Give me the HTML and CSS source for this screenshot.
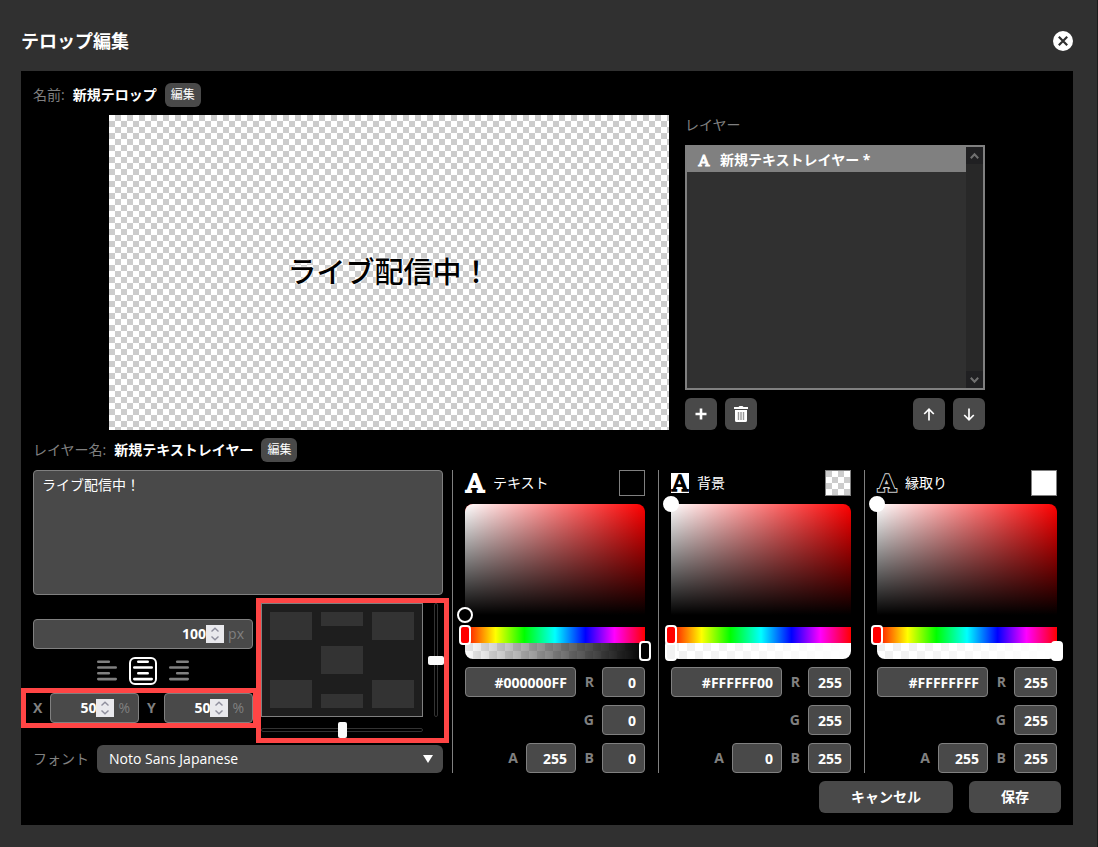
FILE: index.html
```html
<!DOCTYPE html>
<html lang="ja">
<head>
    <meta charset="UTF-8">
    <meta name="viewport" content="width=device-width, initial-scale=1.0">
    <title>テロップ編集</title>
    <link rel="stylesheet" href="styles.css">
</head>
<body>
    <div class="dialog">
        <header class="header">
            <h1 class="title">テロップ編集</h1>
            <button class="close" aria-label="閉じる">
                <svg width="20" height="20" viewBox="0 0 20 20"><circle cx="10" cy="10" r="10" fill="#fff"/><path d="M5.8 5.8l8.4 8.4M14.2 5.8l-8.4 8.4" stroke="#303030" stroke-width="2.2"/></svg>
            </button>
        </header>

        <main class="panel">
            <div class="name-row">
                <span class="muted">名前:</span>
                <strong>新規テロップ</strong>
                <button class="edit">編集</button>
            </div>

            <div class="stage">
                <div class="preview checker">ライブ配信中！</div>
                <section class="layers">
                    <h2 class="layers-title">レイヤー</h2>
                    <div class="layer-list">
                        <div class="layer-items">
                            <div class="layer-item">
                                <svg width="14" height="12" viewBox="0 0 14 12"><text class="slab" x="7" y="12" font-size="15" text-anchor="middle" fill="#fff" stroke="#fff" stroke-width="1">A</text></svg>
                                <span>新規テキストレイヤー *</span>
                            </div>
                        </div>
                        <div class="scrollbar">
                            <span class="scroll-end"><svg width="9" height="6" viewBox="0 0 9 6"><path d="M.8 5.2l3.7-4 3.7 4" fill="none" stroke="#707070" stroke-width="2"/></svg></span>
                            <span class="scroll-end"><svg width="9" height="6" viewBox="0 0 9 6"><path d="M.8.8l3.7 4 3.7-4" fill="none" stroke="#707070" stroke-width="2"/></svg></span>
                        </div>
                    </div>
                    <div class="layer-buttons">
                        <button class="icon-button" aria-label="追加"><svg width="12" height="12" viewBox="0 0 12 12"><path d="M6 .5v11M.5 6h11" stroke="#fff" stroke-width="2.6"/></svg></button>
                        <button class="icon-button" aria-label="削除"><svg width="14" height="16" viewBox="0 0 14 16"><path d="M0 1h4.5L5.5 0h3l1 1H14v2H0zM1 4h12v10.500a1.500 1.500 0 0 1-1.500 1.500h-9A1.500 1.500 0 0 1 1 14.500z" fill="#fff"/><path d="M4.500 6v8M7 6v8M9.500 6v8" stroke="#999" stroke-width="1.400"/></svg></button>
                        <span class="spacer"></span>
                        <button class="icon-button" aria-label="上へ"><svg width="12" height="13" viewBox="0 0 12 13"><path d="M6 12.500V1.500M1.200 6L6 1.200 10.800 6" fill="none" stroke="#fff" stroke-width="1.700"/></svg></button>
                        <button class="icon-button" aria-label="下へ"><svg width="12" height="13" viewBox="0 0 12 13"><path d="M6 .5v11M1.200 7L6 11.800 10.800 7" fill="none" stroke="#fff" stroke-width="1.700"/></svg></button>
                    </div>
                </section>
            </div>

            <div class="name-row">
                <span class="muted">レイヤー名:</span>
                <strong>新規テキストレイヤー</strong>
                <button class="edit">編集</button>
            </div>

            <div class="settings">
                <div class="text-settings">
                    <textarea class="text-area" aria-label="テキスト">ライブ配信中！</textarea>

                    <div class="layout-row">
                        <div class="metrics">
                            <div class="number">
                                <input type="text" inputmode="numeric" value="100" aria-label="サイズ">
                                <span class="spin"><svg width="10" height="14" viewBox="0 0 10 14"><path d="M1.500 4.500L5 1.200l3.500 3.300M1.500 9.500L5 12.800l3.500-3.300" fill="none" stroke="#8f8f9d" stroke-width="1.400"/></svg></span>
                                <span class="muted">px</span>
                            </div>
                            <div class="align">
                                <button class="align-button" aria-label="左揃え"><svg width="20" height="21" viewBox="0 0 20 21"><path d="M1.300 1.700h10.500M1.300 7.500h17.400M1.300 13.300h10.500M1.300 19.100h17.400"/></svg></button>
                                <button class="align-button selected" aria-label="中央揃え"><svg width="20" height="21" viewBox="0 0 20 21"><path d="M5.300 1.700h9.400M1.300 7.500h17.400M5.300 13.300h9.400M1.300 19.100h17.400"/></svg></button>
                                <button class="align-button" aria-label="右揃え"><svg width="20" height="21" viewBox="0 0 20 21"><path d="M8.200 1.700h10.500M1.300 7.500h17.400M8.200 13.300h10.500M1.300 19.100h17.400"/></svg></button>
                            </div>
                            <div class="coords">
                                <label for="pos-x">X</label>
                                <div class="number">
                                    <input id="pos-x" type="text" inputmode="numeric" value="50">
                                    <span class="spin"><svg width="10" height="14" viewBox="0 0 10 14"><path d="M1.500 4.500L5 1.200l3.500 3.300M1.500 9.500L5 12.800l3.500-3.300" fill="none" stroke="#8f8f9d" stroke-width="1.400"/></svg></span>
                                    <span class="muted">%</span>
                                </div>
                                <label for="pos-y">Y</label>
                                <div class="number">
                                    <input id="pos-y" type="text" inputmode="numeric" value="50">
                                    <span class="spin"><svg width="10" height="14" viewBox="0 0 10 14"><path d="M1.500 4.500L5 1.200l3.500 3.300M1.500 9.500L5 12.800l3.500-3.300" fill="none" stroke="#8f8f9d" stroke-width="1.400"/></svg></span>
                                    <span class="muted">%</span>
                                </div>
                                <div class="highlight highlight-coords"></div>
                            </div>
                        </div>

                        <div class="position">
                            <div class="pad">
                                <button class="cell" aria-label="左上"></button>
                                <button class="cell half" aria-label="上"></button>
                                <button class="cell" aria-label="右上"></button>
                                <button class="cell middle" aria-label="中央"></button>
                                <button class="cell bottom-left" aria-label="左下"></button>
                                <button class="cell half low" aria-label="下"></button>
                                <button class="cell bottom-right" aria-label="右下"></button>
                            </div>
                            <input class="slider slider-y" type="range" value="50" aria-label="縦位置">
                            <input class="slider slider-x" type="range" value="50" aria-label="横位置">
                            <div class="highlight highlight-position"></div>
                        </div>
                    </div>

                    <div class="font-row">
                        <label class="muted" for="font">フォント</label>
                        <div class="select">
                            <select id="font"><option>Noto Sans Japanese</option></select>
                            <svg class="select-arrow" width="10" height="8" viewBox="0 0 10 8"><path d="M0 0h10L5 8z" fill="#fff"/></svg>
                        </div>
                    </div>
                </div>

                <section class="color color-text">
                    <div class="color-head">
                        <svg width="20" height="20" viewBox="0 0 20 20"><text class="slab" x="10" y="19" font-size="25" text-anchor="middle" fill="#fff" stroke="#fff" stroke-width="1.800">A</text></svg>
                        <span>テキスト</span>
                        <button class="swatch" aria-label="テキストの色"></button>
                    </div>
                    <div class="picker">
                        <div class="saturation"><span class="point"></span></div>
                        <div class="bar hue"><input type="range" min="0" max="360" value="0" aria-label="色相"></div>
                        <div class="bar alpha"><input type="range" min="0" max="255" value="255" aria-label="不透明度"></div>
                    </div>
                    <div class="channels">
                        <input class="hex" type="text" value="#000000FF" aria-label="カラーコード">
                        <label for="text-r">R</label><input id="text-r" type="text" value="0">
                        <label class="green" for="text-g">G</label><input id="text-g" type="text" value="0">
                        <label for="text-a">A</label><input id="text-a" type="text" value="255">
                        <label for="text-b">B</label><input id="text-b" type="text" value="0">
                    </div>
                </section>

                <section class="color color-back">
                    <div class="color-head">
                        <svg width="18" height="20" viewBox="0 0 18 20"><path d="M0 0h18v20H0z" fill="#fff"/><text class="slab" x="9" y="18" font-size="22" text-anchor="middle" stroke="#000" stroke-width="1.600">A</text></svg>
                        <span>背景</span>
                        <button class="swatch checker" aria-label="背景の色"></button>
                    </div>
                    <div class="picker">
                        <div class="saturation"><span class="point"></span></div>
                        <div class="bar hue"><input type="range" min="0" max="360" value="0" aria-label="色相"></div>
                        <div class="bar alpha"><input type="range" min="0" max="255" value="0" aria-label="不透明度"></div>
                    </div>
                    <div class="channels">
                        <input class="hex" type="text" value="#FFFFFF00" aria-label="カラーコード">
                        <label for="back-r">R</label><input id="back-r" type="text" value="255">
                        <label class="green" for="back-g">G</label><input id="back-g" type="text" value="255">
                        <label for="back-a">A</label><input id="back-a" type="text" value="0">
                        <label for="back-b">B</label><input id="back-b" type="text" value="255">
                    </div>
                </section>

                <section class="color color-edge">
                    <div class="color-head">
                        <svg width="20" height="20" viewBox="0 0 20 20"><text class="slab" x="10" y="18" font-size="23" text-anchor="middle" stroke="#ccc" stroke-width="3.600">A</text><text class="slab" x="10" y="18" font-size="23" text-anchor="middle" stroke="#000" stroke-width="1.600">A</text></svg>
                        <span>縁取り</span>
                        <button class="swatch" aria-label="縁取りの色"></button>
                    </div>
                    <div class="picker">
                        <div class="saturation"><span class="point"></span></div>
                        <div class="bar hue"><input type="range" min="0" max="360" value="0" aria-label="色相"></div>
                        <div class="bar alpha"><input type="range" min="0" max="255" value="255" aria-label="不透明度"></div>
                    </div>
                    <div class="channels">
                        <input class="hex" type="text" value="#FFFFFFFF" aria-label="カラーコード">
                        <label for="edge-r">R</label><input id="edge-r" type="text" value="255">
                        <label class="green" for="edge-g">G</label><input id="edge-g" type="text" value="255">
                        <label for="edge-a">A</label><input id="edge-a" type="text" value="255">
                        <label for="edge-b">B</label><input id="edge-b" type="text" value="255">
                    </div>
                </section>
            </div>

            <footer class="footer">
                <button class="action">キャンセル</button>
                <button class="action">保存</button>
            </footer>
        </main>
    </div>
</body>
</html>
```
FILE: styles.css
```css
* {
    box-sizing: border-box;
}

body {
    margin: 0;
    background: #303030;
    color: #fff;
    font-family: "Open Sans", "Noto Sans CJK JP", sans-serif;
    font-size: 14px;
    line-height: 20px;
}

button, input, select, textarea {
    margin: 0;
    font: inherit;
    color: inherit;
}

button {
    padding: 0;
    border: none;
    background: #494949;
    cursor: pointer;
}

svg {
    display: block;
    overflow: visible;
}

.dialog {
    min-height: 100vh;
    padding: 0 24px 22px 21px;
    border-right: 1px solid #1c1c1c;
}

.header {
    display: flex;
    justify-content: space-between;
    align-items: center;
    height: 71px;
    padding-top: 11px;
}

.title {
    margin: 0;
    font-size: 18px;
    line-height: 24px;
}

.close {
    background: none;
}

.panel {
    padding: 12px;
    background: #000;
}

.muted {
    color: #808080;
}

.slab {
    font-family: "DejaVu Serif", serif;
    font-weight: normal;
}

.checker {
    background: conic-gradient(#ccc 25%, #fff 0 50%, #ccc 0 75%, #fff 0) 0 0 / 12px 12px;
}

.name-row {
    display: flex;
    align-items: center;
    gap: 8px;
    height: 24px;
    margin-bottom: 8px;
}

.edit {
    height: 24px;
    padding: 0 6px;
    border-radius: 6px;
    font-size: 12px;
}

/* preview and layer list */
.stage {
    display: flex;
    justify-content: center;
    gap: 16px;
    margin-bottom: 8px;
}

.preview {
    display: flex;
    justify-content: center;
    align-items: center;
    width: 560px;
    aspect-ratio: 16 / 9;
    padding-bottom: 6px;
    color: #000;
    font-family: "Noto Sans CJK JP", sans-serif;
    font-size: 29px;
    font-weight: 500;
    text-shadow: 0 0 1px #fff, 0 0 2px #fff, 0 0 2px #fff;
}

.layers {
    display: flex;
    flex-direction: column;
    width: 300px;
}

.layers-title {
    margin: 0 0 10px;
    color: #808080;
    font-size: 14px;
    font-weight: normal;
    line-height: 20px;
}

.layer-list {
    display: flex;
    flex: 1;
    border: 2px solid #808080;
    background: #303030;
}

.layer-items {
    flex: 1;
}

.layer-item {
    display: flex;
    align-items: center;
    gap: 9px;
    height: 25px;
    padding-left: 10px;
    background: #808080;
    font-weight: bold;
}

.scrollbar {
    display: flex;
    flex-direction: column;
    justify-content: space-between;
    width: 17px;
    background: #282828;
}

.scroll-end {
    display: grid;
    place-items: center;
    height: 17px;
    background: #202022;
}

.layer-buttons {
    display: flex;
    gap: 8px;
    margin-top: 8px;
}

.spacer {
    flex: 1;
}

.icon-button {
    display: grid;
    place-items: center;
    width: 32px;
    height: 32px;
    border-radius: 6px;
}

/* text settings */
.settings {
    display: flex;
    gap: 9px;
    padding-right: 4px;
}

.text-settings {
    flex: 1;
    min-width: 0;
}

.text-area {
    display: block;
    width: 100%;
    height: 125px;
    padding: 4px 8px;
    border: 1px solid #808080;
    border-radius: 4px;
    background: #494949;
    resize: none;
}

.layout-row {
    display: flex;
    align-items: center;
    gap: 8px;
    margin-top: 8px;
}

.metrics {
    display: flex;
    flex: 1 0 220px;
    flex-direction: column;
    gap: 8px;
}

.number {
    display: flex;
    align-items: center;
    min-width: 0;
    height: 30px;
    padding-right: 8px;
    border: 1px solid #808080;
    border-radius: 4px;
    background: #494949;
}

.number input {
    flex: 1;
    width: 0;
    padding: 0;
    border: none;
    background: none;
    font-weight: bold;
    text-align: right;
}

.spin {
    display: grid;
    place-items: center;
    width: 18px;
    height: 18px;
    margin-right: 4px;
    background: #e9e9ed;
}

.align {
    display: flex;
    justify-content: center;
    gap: 8px;
}

.align-button {
    display: grid;
    place-items: center;
    width: 28px;
    height: 28px;
    border: 2px solid transparent;
    border-radius: 6px;
    background: none;
}

.align-button path {
    fill: none;
    stroke: #808080;
    stroke-width: 2.6;
    stroke-linecap: round;
}

.align-button.selected {
    border-color: #fff;
}

.align-button.selected path {
    stroke: #fff;
}

.coords {
    position: relative;
    display: flex;
    align-items: center;
    gap: 8px;
}

.coords label {
    width: 9px;
    color: #808080;
    font-weight: bold;
}

.coords .number {
    flex: 1;
}

.highlight {
    position: absolute;
    border: 5px solid #ff4545;
    pointer-events: none;
}

.highlight-coords {
    inset: -5px -5px -5px -12px;
}

.highlight-position {
    inset: -5px;
}

.position {
    position: relative;
    display: grid;
    grid-template-columns: 162px 16px;
    gap: 5px;
}

.pad {
    display: grid;
    grid-template-columns: repeat(3, 1fr);
    grid-template-rows: repeat(3, 28px);
    gap: 6px 9px;
    padding: 8px;
    border: 1px solid #808080;
    background: #1e1e1e;
}

.cell {
    background: #333;
}

.cell.half {
    height: 14px;
}

.cell.middle {
    grid-area: 2 / 2;
}

.cell.bottom-left {
    grid-area: 3 / 1;
}

.cell.low {
    grid-area: 3 / 2;
    align-self: end;
}

.cell.bottom-right {
    grid-area: 3 / 3;
}

.slider {
    appearance: none;
    background: none;
}

.slider-x {
    width: 162px;
    height: 16px;
}

.slider-y {
    width: 16px;
    height: 114px;
    writing-mode: vertical-lr;
}

.slider::-webkit-slider-runnable-track {
    border: 1px solid #333;
    border-radius: 2px;
    background: #000;
}

.slider-x::-webkit-slider-runnable-track {
    height: 4px;
}

.slider-y::-webkit-slider-runnable-track {
    width: 4px;
}

.slider::-webkit-slider-thumb {
    appearance: none;
    border-radius: 2px;
    background: #fafafa;
}

.slider-x::-webkit-slider-thumb {
    width: 9px;
    height: 16px;
    margin-top: -7px;
}

.slider-y::-webkit-slider-thumb {
    width: 16px;
    height: 9px;
    margin-left: -7px;
}

.font-row {
    display: flex;
    align-items: center;
    gap: 8px;
    margin-top: 7px;
}

.select {
    position: relative;
    flex: 1;
}

.select select {
    display: block;
    width: 100%;
    height: 28px;
    padding: 0 32px 0 12px;
    border: none;
    border-radius: 6px;
    background: #494949;
    appearance: none;
}

.select-arrow {
    position: absolute;
    top: 10px;
    right: 10px;
    pointer-events: none;
}

/* color pickers */
.color {
    width: 197px;
    padding: 0 4px 0 12px;
    border-left: 1px solid #808080;
}

.color:last-child {
    width: 193px;
    padding-right: 0;
}

.color-head {
    display: flex;
    align-items: center;
    gap: 8px;
    height: 26px;
    margin-bottom: 8px;
}

.swatch {
    width: 26px;
    height: 26px;
    margin-left: auto;
    border: 1px solid #808080;
}

.color-text .swatch {
    background: #000;
}

.color-edge .swatch {
    background: #fff;
}

.swatch.checker {
    background-position: 6px 0;
}

.picker {
    margin-bottom: 8px;
}

.saturation {
    position: relative;
    height: 123px;
    border-bottom: 12px solid #000;
    border-radius: 8px 8px 0 0;
    background: linear-gradient(to top, #000, transparent), linear-gradient(to right, #fff, transparent) #f00;
}

.point {
    position: absolute;
    top: -8px;
    left: -8px;
    width: 16px;
    height: 16px;
    border: 2px solid #fff;
    border-radius: 50%;
    background: #fff;
}

.color-text .point {
    top: auto;
    bottom: -8px;
    background: #000;
}

.bar {
    height: 16px;
}

.hue {
    background: linear-gradient(to right, #f00 0%, #ff0 17%, #0f0 33%, #0ff 50%, #00f 67%, #f0f 83%, #f00 100%);
}

.alpha {
    border-radius: 0 0 8px 8px;
    background: linear-gradient(to right, rgba(255, 255, 255, 0), #fff), conic-gradient(#fff 25%, #f0f0f0 0 50%, #fff 0 75%, #f0f0f0 0) 0 0 / 16px 16px;
}

.color-text .alpha {
    background: linear-gradient(to right, rgba(0, 0, 0, 0), #000), conic-gradient(#fff 25%, #eaeaea 0 50%, #fff 0 75%, #eaeaea 0) 0 0 / 16px 16px;
}

/* the thumb hangs over both ends of the bar */
.bar input {
    display: block;
    width: calc(100% + 12px);
    height: 20px;
    margin: 0 -6px;
    appearance: none;
    background: none;
    transform: translateY(-2px);
}

.hue input {
    position: relative;
    z-index: 1;
}

.bar input::-webkit-slider-thumb {
    appearance: none;
    width: 12px;
    height: 20px;
    border: 2px solid #fff;
    border-radius: 4px;
    background: #f00;
}

.alpha input::-webkit-slider-thumb {
    background: #fff;
}

.color-text .alpha input::-webkit-slider-thumb {
    background: #000;
}

.color-back .alpha input::-webkit-slider-thumb {
    background: #f2f2f2;
}

.channels {
    display: grid;
    grid-template-columns: 1fr 50px 26px 43px;
    row-gap: 8px;
    align-items: center;
    font-weight: bold;
}

.channels label {
    padding-right: 8px;
    color: #808080;
    text-align: right;
}

.channels input {
    width: 100%;
    height: 30px;
    padding: 0 8px;
    border: 1px solid #808080;
    border-radius: 4px;
    background: #494949;
    text-align: right;
}

.channels .hex {
    grid-column: span 2;
}

.channels .green {
    grid-column: 3;
}

.footer {
    display: flex;
    justify-content: flex-end;
    gap: 16px;
    margin-top: 8px;
}

.action {
    height: 32px;
    padding: 0 32px;
    border-radius: 6px;
    font-weight: bold;
}
```
